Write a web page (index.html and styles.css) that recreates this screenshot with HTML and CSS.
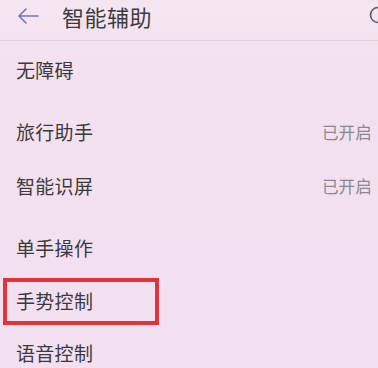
FILE: index.html
```html
<!DOCTYPE html>
<html lang="zh-CN">
<head>
<meta charset="utf-8">
<link rel="stylesheet" href="styles.css">
</head>
<body>
<div class="page">
  <header class="bar">
    <div class="bar-left">
      <svg class="back" width="22" height="16" viewBox="0 0 22 16"><path d="M21 8H2M9 1L2 8l7 7" fill="none" stroke="#7474c2" stroke-width="1.6" stroke-linecap="round" stroke-linejoin="round"/></svg>
      <span class="title">智能辅助</span>
    </div>
    <svg class="search" width="20" height="20" viewBox="0 0 20 20"><circle cx="9" cy="9" r="7.5" fill="none" stroke="#5a5a70" stroke-width="1.6"/></svg>
  </header>
  <div class="row r1"><span class="label">无障碍</span></div>
  <div class="row r2"><span class="label">旅行助手</span><span class="status">已开启</span></div>
  <div class="row r3"><span class="label">智能识屏</span><span class="status">已开启</span></div>
  <div class="row r4"><span class="label">单手操作</span></div>
  <div class="row r5"><span class="hl"><span class="label">手势控制</span></span></div>
  <div class="row r6"><span class="label">语音控制</span></div>
</div>
</body>
</html>
```
FILE: styles.css
```css
html, body {
  margin: 0;
  padding: 0;
  background: #f3e0ef;
  overflow: hidden;
}
.page {
  width: 378px;
  height: 368px;
  font-family: "Noto Sans CJK SC", "Noto Sans", sans-serif;
  color: #3a3a3a;
  background: linear-gradient(#f4e6ef 0, #f3e1ef 60px, #f2dff0 100%);
}
.bar {
  height: 31px;
  padding-bottom: 9px;
  border-bottom: 1px solid #d9cdd8;
  display: flex;
  align-items: center;
  justify-content: space-between;
}
.bar-left {
  display: flex;
  align-items: center;
  padding-left: 17px;
}
.back {
  display: block;
}
.title {
  margin-left: 23px;
  font-size: 22px;
  line-height: 28px;
  color: #3c3c3e;
  letter-spacing: 0.5px;
}
.search {
  display: block;
  margin-right: -11px;
}
.row {
  display: flex;
  align-items: center;
  justify-content: space-between;
  padding-left: 16px;
  padding-right: 6px;
}
.label {
  font-size: 19px;
  line-height: 26px;
  color: #3a3a3c;
  letter-spacing: 0.3px;
}
.status {
  font-size: 16.5px;
  line-height: 22px;
  color: #8c898e;
  letter-spacing: 0.2px;
}
.r1 { height: 58px; }
.r2 { height: 54px; margin-top: 6px; }
.r3 { height: 54px; }
.r4 { height: 54px; margin-top: 8px; }
.r5 { height: 52px; padding-left: 3px; }
.r6 { height: 52px; }
.hl {
  box-sizing: border-box;
  width: 156px;
  height: 47px;
  border: 4px solid #e0343a;
  display: flex;
  align-items: center;
  padding-left: 9px;
}
```
